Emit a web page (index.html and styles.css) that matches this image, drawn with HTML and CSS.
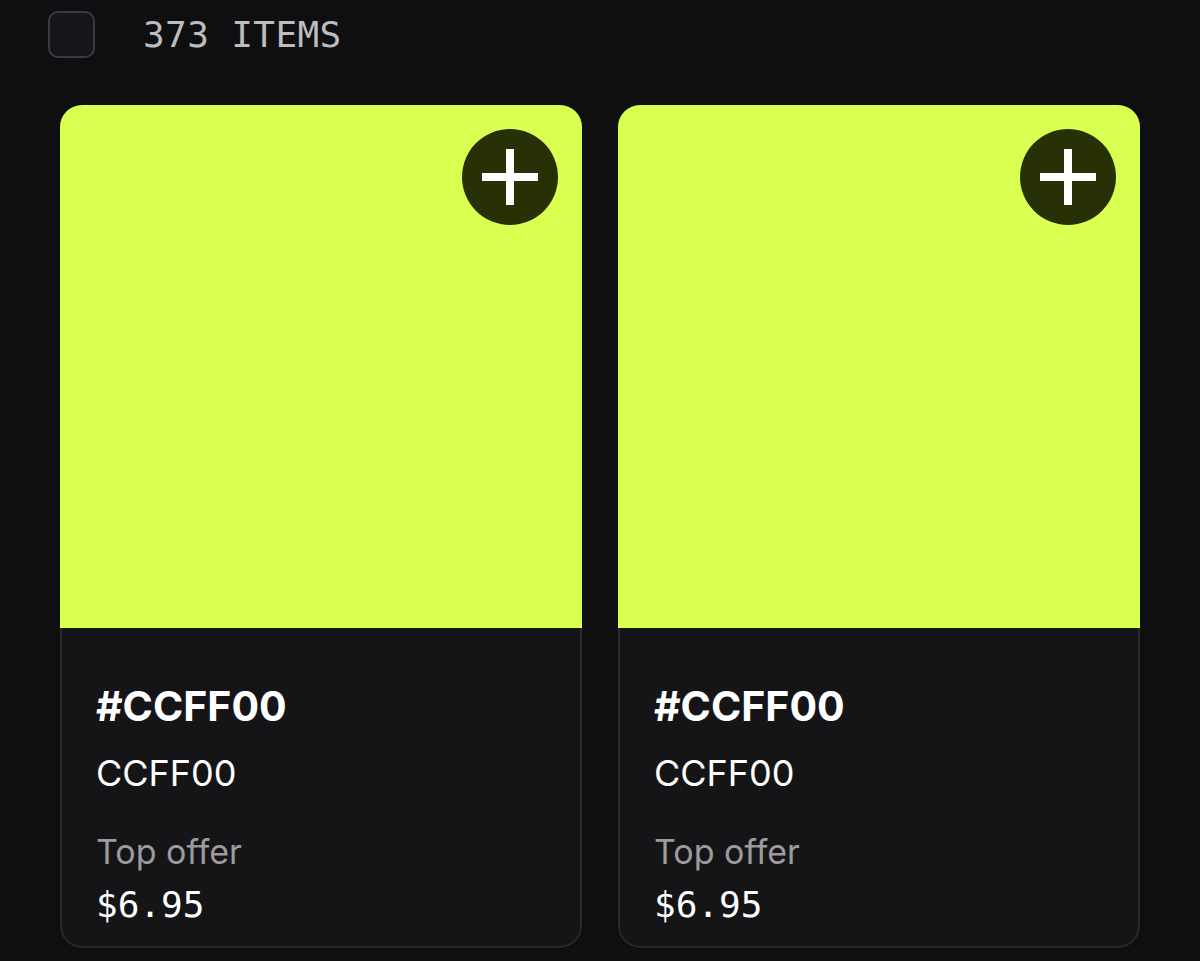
FILE: index.html
```html
<!DOCTYPE html>
<html>
<head>
<meta charset="utf-8">
<link rel="stylesheet" href="styles.css">
</head>
<body>
<div class="page">
  <div class="toolbar">
    <div class="checkbox"></div>
    <div class="count">373 ITEMS</div>
  </div>
  <div class="grid">
    <div class="card">
      <div class="swatch">
        <button class="add" aria-label="Add">
          <svg width="56" height="56" viewBox="0 0 56 56"><rect x="24" y="0" width="8" height="56" fill="#fff"/><rect x="0" y="24" width="56" height="8" fill="#fff"/></svg>
        </button>
      </div>
      <div class="info">
        <div class="title">#CCFF00</div>
        <div class="sub">CCFF00</div>
        <div class="label">Top offer</div>
        <div class="price">$6.95</div>
      </div>
    </div>
    <div class="card">
      <div class="swatch">
        <button class="add" aria-label="Add">
          <svg width="56" height="56" viewBox="0 0 56 56"><rect x="24" y="0" width="8" height="56" fill="#fff"/><rect x="0" y="24" width="56" height="8" fill="#fff"/></svg>
        </button>
      </div>
      <div class="info">
        <div class="title">#CCFF00</div>
        <div class="sub">CCFF00</div>
        <div class="label">Top offer</div>
        <div class="price">$6.95</div>
      </div>
    </div>
  </div>
</div>
</body>
</html>
```
FILE: styles.css
```css
html, body {
  margin: 0;
  padding: 0;
  background: #0f0f11;
}
body {
  font-family: Inter, "Liberation Sans", sans-serif;
  color: #fff;
  overflow: hidden;
}
.page {
  padding: 11px 60px 0 60px;
}
.toolbar {
  display: flex;
  align-items: center;
  gap: 48px;
  margin-left: -12px;
  height: 47px;
}
.checkbox {
  width: 43px;
  height: 43px;
  border: 2px solid #3a3a40;
  border-radius: 10px;
  background: #16161a;
}
.count {
  font-family: "DejaVu Sans Mono", "Liberation Mono", monospace;
  font-size: 36px;
  color: #bdbdbd;
  letter-spacing: 0.4px;
}
.grid {
  display: grid;
  grid-template-columns: 522px 522px;
  gap: 36px;
  margin-top: 47px;
}
.card {
  border-radius: 22px;
  overflow: hidden;
  background: #151518;
  height: 843px;
  box-sizing: border-box;
  display: flex;
  flex-direction: column;
}
.swatch {
  background: #d9ff50;
  height: 523px;
  position: relative;
  flex: none;
}
.add {
  position: absolute;
  top: 24px;
  right: 24px;
  width: 96px;
  height: 96px;
  border-radius: 50%;
  border: none;
  background: #283005;
  display: flex;
  align-items: center;
  justify-content: center;
  padding: 0;
}
.info {
  flex: 1;
  border: 2px solid #2a2a2e;
  border-top: none;
  border-radius: 0 0 22px 22px;
  padding: 54px 34px 0 34px;
}
.title {
  font-size: 41px;
  font-weight: 700;
  line-height: 48px;
}
.sub {
  font-size: 36px;
  line-height: 44px;
  margin-top: 21px;
}
.label {
  font-size: 34px;
  line-height: 42px;
  color: #9c9c9f;
  margin-top: 36px;
}
.price {
  font-family: "DejaVu Sans Mono", "Liberation Mono", monospace;
  font-size: 36px;
  line-height: 44px;
  margin-top: 10px;
}
```
